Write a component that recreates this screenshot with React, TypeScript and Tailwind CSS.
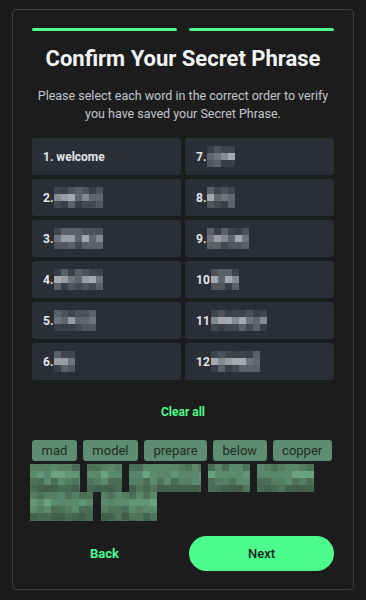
import React from 'react';

// Pixelated blocks that stand in for the hidden words
const GRAY = [
  ['#3f454d', '#4b525b', '#59606a', '#3a3f47'],
  ['#6d747c', '#838a91', '#979da3', '#5f666f', '#a4a9ae'],
  ['#434950', '#4f565f', '#5a616a', '#3a3f47'],
];
const GREEN = [
  ['#4d7258', '#557e62', '#5a866a', '#4a6e55'],
  ['#5c8a6d', '#639676', '#6ba27f', '#5a876b'],
  ['#4e7359', '#557e62', '#5c8a6d', '#4a6d55'],
  ['#43624e', '#486a53', '#4e7359', '#405e4a'],
];

function rand(seed: number) {
  let s = seed * 9301 + 49297;
  return () => {
    s = (s * 9301 + 49297) % 233280;
    return s / 233280;
  };
}

function Mosaic({ w, h, seed, palette }: { w: number; h: number; seed: number; palette: string[][] }) {
  const r = rand(seed);
  const cols = Math.ceil(w / 7);
  const rows = Math.ceil(h / 7);
  const cells: string[] = [];
  for (let y = 0; y < rows; y++) {
    const p = palette[Math.min(y, palette.length - 1)];
    for (let x = 0; x < cols; x++) cells.push(p[Math.floor(r() * p.length)]);
  }
  return (
    <div className="overflow-hidden shrink-0" style={{ width: w, height: h }}>
      <div className="flex flex-wrap" style={{ width: cols * 7 }}>
        {cells.map((c, i) => (
          <div key={i} className="w-[7px] h-[7px]" style={{ background: c }} />
        ))}
      </div>
    </div>
  );
}

const WORDS: { n: string; w: number }[] = [
  { n: '2.', w: 49 },
  { n: '3.', w: 49 },
  { n: '4.', w: 49 },
  { n: '5.', w: 42 },
  { n: '6.', w: 21 },
];
const WORDS_R: { n: string; w: number }[] = [
  { n: '7.', w: 28 },
  { n: '8.', w: 28 },
  { n: '9.', w: 42 },
  { n: '10', w: 28 },
  { n: '11', w: 56 },
  { n: '12', w: 49 },
];

const CHIPS = ['mad', 'model', 'prepare', 'below', 'copper'];

function Cell({ children }: { children: React.ReactNode }) {
  return (
    <div className="h-[37px] rounded-[3px] bg-[#2a2f37] flex items-center pl-[11px] text-[12px] font-bold text-[#e4e6ea]">
      {children}
    </div>
  );
}

export default function App() {
  const left: React.ReactNode[] = [<span key="w">1. welcome</span>];
  WORDS.forEach((x, i) =>
    left.push(
      <span key={x.n} className="flex items-center gap-[1px]">
        {x.n}
        <Mosaic w={x.w} h={21} seed={i + 3} palette={GRAY} />
      </span>
    )
  );

  return (
    <div className="min-h-screen bg-[#1b1b1b] px-3 pt-[9px] pb-[11px]" style={{ fontFamily: 'Roboto, "Liberation Sans", sans-serif' }}>
      <div className="h-[581px] border border-[#3b3e44] rounded-[4px] bg-[#1c1c1c] px-[19px] pt-[18px] flex flex-col">
        {/* progress */}
        <div className="grid grid-cols-2 gap-3">
          <div className="h-[3px] bg-[#4cfc8d] rounded-full" />
          <div className="h-[3px] bg-[#4cfc8d] rounded-full" />
        </div>

        <h1 className="mt-[14px] text-center text-[22px] leading-[28px] font-bold text-[#f3f4f6]">
          Confirm Your Secret Phrase
        </h1>
        <p className="mt-[14px] text-center text-[12.5px] leading-[18px] text-[#c3c7cd] whitespace-nowrap">
          Please select each word in the correct order to verify
          <br />
          you have saved your Secret Phrase.
        </p>

        {/* word grid */}
        <div className="mt-[15px] grid grid-cols-2 gap-x-[4px] gap-y-[4px] grid-flow-col grid-rows-6">
          {left.map((c, i) => (
            <Cell key={i}>{c}</Cell>
          ))}
          {WORDS_R.map((x, i) => (
            <Cell key={x.n}>
              <span className="flex items-center gap-[1px]">
                {x.n}
                <Mosaic w={x.w} h={21} seed={i + 11} palette={GRAY} />
              </span>
            </Cell>
          ))}
        </div>

        <div className="mt-[23px] text-center text-[12px] font-bold text-[#4cfc8d]">Clear all</div>

        {/* selected words */}
        <div className="mt-[19px] flex gap-[6px]">
          {CHIPS.map((c) => (
            <div key={c} className="h-[21px] px-[9.5px] rounded-[3px] bg-[#5f8d71] text-[#1f2b24] text-[13px] flex items-center">
              {c}
            </div>
          ))}
        </div>
        <div className="mt-[3px] -ml-[2px] flex gap-[7px]">
          <Mosaic w={50} h={28} seed={21} palette={GREEN} />
          <Mosaic w={35} h={28} seed={22} palette={GREEN} />
          <Mosaic w={72} h={28} seed={23} palette={GREEN} />
          <Mosaic w={42} h={28} seed={24} palette={GREEN} />
          <Mosaic w={57} h={28} seed={25} palette={GREEN} />
        </div>
        <div className="-ml-[2px] flex gap-[8px]">
          <Mosaic w={63} h={29} seed={26} palette={GREEN} />
          <Mosaic w={56} h={29} seed={27} palette={GREEN} />
        </div>

        {/* actions */}
        <div className="mt-[15px] grid grid-cols-2 gap-3">
          <button className="h-[35px] text-[13px] font-bold text-[#4cfc8d]">Back</button>
          <button className="h-[35px] rounded-full bg-[#4cfc8d] text-[13px] font-medium text-[#1c1f1d]">Next</button>
        </div>
      </div>
    </div>
  );
}
